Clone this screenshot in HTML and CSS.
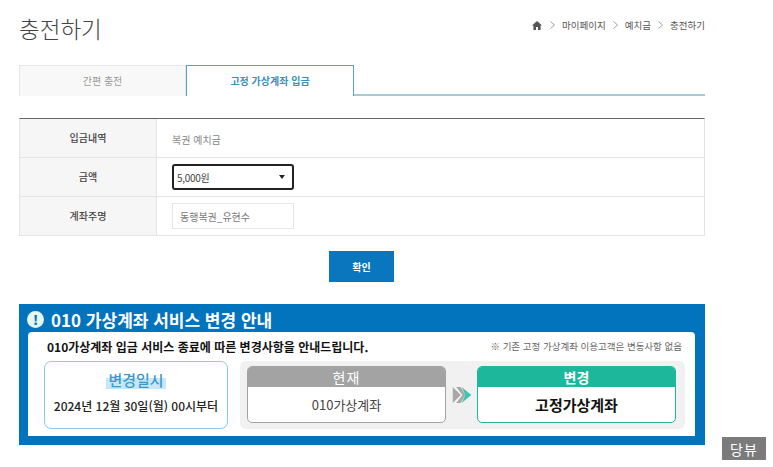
FILE: index.html
```html
<!DOCTYPE html>
<html lang="ko">
<head>
<meta charset="utf-8">
<title>충전하기</title>
<link rel="stylesheet" href="styles.css">
</head>
<body>
<div class="page">
  <header class="head">
    <h1 class="title">충전하기</h1>
    <nav class="crumbs">
      <svg class="home" viewBox="0 0 10 9" width="10" height="9"><path d="M5 0 L10 4.6 H8.6 V9 H6 V6 H4 V9 H1.4 V4.6 H0 Z" fill="#555"/></svg>
      <svg class="sep" viewBox="0 0 5 8" width="5" height="8"><path d="M0.5 0.5 L4.5 4 L0.5 7.5" fill="none" stroke="#888" stroke-width="0.8"/></svg><span>마이페이지</span>
      <svg class="sep" viewBox="0 0 5 8" width="5" height="8"><path d="M0.5 0.5 L4.5 4 L0.5 7.5" fill="none" stroke="#888" stroke-width="0.8"/></svg><span>예치금</span>
      <svg class="sep" viewBox="0 0 5 8" width="5" height="8"><path d="M0.5 0.5 L4.5 4 L0.5 7.5" fill="none" stroke="#888" stroke-width="0.8"/></svg><span>충전하기</span>
    </nav>
  </header>
  <div class="tabs">
    <div class="tab">간편 충전</div>
    <div class="tab active">고정 가상계좌 입금</div>
  </div>
  <div class="form">
    <div class="row">
      <div class="th">입금내역</div>
      <div class="td muted">복권 예치금</div>
    </div>
    <div class="row">
      <div class="th">금액</div>
      <div class="td"><div class="select"><span>5,000원</span><i class="caret"></i></div></div>
    </div>
    <div class="row">
      <div class="th">계좌주명</div>
      <div class="td"><div class="input">동행복권_유현수</div></div>
    </div>
  </div>
  <div class="actions"><button class="btn">확인</button></div>
  <section class="notice">
    <h2 class="notice-title"><span class="bang">!</span>010 가상계좌 서비스 변경 안내</h2>
    <div class="panel">
      <div class="panel-head">
        <strong>010가상계좌 입금 서비스 종료에 따른 변경사항을 안내드립니다.</strong>
        <small>※ 기존 고정 가상계좌 이용고객은 변동사항 없음</small>
      </div>
      <div class="panel-body">
        <div class="date">
          <div class="date-label">변경일시</div>
          <div class="date-value">2024년 12월 30일(월) 00시부터</div>
        </div>
        <div class="compare">
          <div class="card now">
            <div class="card-head">현재</div>
            <div class="card-body">010가상계좌</div>
          </div>
          <svg class="arrows" viewBox="0 0 22 18" width="21" height="16"><path d="M0 0 L9 9 L0 18 Z" fill="#a8a8a8"/><path d="M4 0 H9 L14 9 L9 18 H4 L11 9 Z" fill="#a8a8a8"/><path d="M10 0 L21 9 L10 18 L14 9 Z" fill="#3fc4b0"/></svg>
          <div class="card next">
            <div class="card-head">변경</div>
            <div class="card-body">고정가상계좌</div>
          </div>
        </div>
      </div>
    </div>
  </section>
</div>
<div class="stamp">당뷰</div>
</body>
</html>
```
FILE: styles.css
```css
* { box-sizing: border-box; }
html, body { margin: 0; padding: 0; background: #fff; height: 467px; overflow: hidden; }
body { font-family: "Noto Sans CJK KR", "Noto Sans", sans-serif; color: #333; position: relative; }
.page { width: 686px; margin-left: 19px; padding-top: 13px; }
.head { display: flex; justify-content: space-between; align-items: center; height: 32px; }
.title { margin: 0; font-size: 22.5px; font-weight: 300; color: #444; line-height: 32px; position: relative; top: -1px; }
.crumbs { display: flex; align-items: center; gap: 7px; font-size: 9.5px; color: #555; margin-top: -8px; }
.home { margin-right: 1px; }
.sep { flex: none; }
.tabs { display: flex; height: 31px; margin-top: 20px; border-bottom: 2px solid #a5c9d5; }
.tab { width: 167px; height: 31px; display: flex; align-items: center; justify-content: center; font-size: 10px; color: #999; background: #f8f8f8; border: 1px solid #e6e6e6; border-bottom: none; padding-bottom: 2px; }
.tab.active { width: 168px; background: #fff; color: #3d8fb3; font-weight: 700; border: 1px solid #5aa3c0; border-bottom: none; }
.form { margin-top: 22px; border-top: 1px solid #666; border-left: 1px solid #e4e4e4; border-right: 1px solid #e4e4e4; }
.row { display: flex; height: 39px; border-bottom: 1px solid #e4e4e4; }
.th { width: 137px; background: #f6f6f6; border-right: 1px solid #e4e4e4; display: flex; align-items: center; justify-content: center; font-size: 10px; font-weight: 500; color: #444; padding-bottom: 1px; }
.td { flex: 1; display: flex; align-items: center; padding-left: 15px; font-size: 10px; color: #444; }
.muted { color: #888; padding-top: 2px; }
.select { width: 122px; height: 26px; border: 2px solid #222; border-radius: 3px; display: flex; align-items: center; justify-content: space-between; padding: 0 7px 0 3px; font-size: 10px; letter-spacing: -0.3px; color: #444; }
.caret { width: 0; height: 0; border-left: 3px solid transparent; border-right: 3px solid transparent; border-top: 4px solid #222; }
.input { width: 122px; height: 26px; border: 1px solid #e6e6e6; display: flex; align-items: center; padding-left: 7px; font-size: 10px; color: #777; }
.actions { display: flex; justify-content: center; margin-top: 15px; padding-right: 1px; }
.btn { width: 65px; height: 31px; border: none; background: #0a76bd; color: #fff; font-family: inherit; font-size: 10px; font-weight: 700; padding: 0; }
.notice { margin-top: 22px; height: 141px; background: #0273bd; padding: 0 10px 9px 9px; display: flex; flex-direction: column; }
.notice-title { margin: 0 0 0 -1px; height: 28px; display: flex; align-items: center; gap: 7px; font-size: 17px; font-weight: 700; color: #fff; padding-top: 2px; line-height: 1; }
.bang { width: 17px; height: 17px; border-radius: 50%; background: #e6f6f0; color: #0273bd; font-size: 13px; font-weight: 900; display: flex; align-items: center; justify-content: center; }
.panel { height: 104px; background: #fff; border-radius: 4px 4px 0 0; padding: 4px 10px 7px 16px; display: flex; flex-direction: column; }
.panel-head { display: flex; justify-content: space-between; align-items: center; height: 20px; padding: 0 3px; margin-bottom: 5px; }
.panel-head strong { font-size: 12px; font-weight: 700; color: #111; }
.panel-head small { font-size: 9.5px; color: #666; }
.panel-body { flex: 1; display: flex; gap: 12px; }
.date { width: 184px; height: 68px; border: 1px solid #8ccae6; border-radius: 7px; display: flex; flex-direction: column; align-items: center; justify-content: center; padding-bottom: 6px; }
.date-label { font-size: 15px; font-weight: 500; color: #3d97c9; background: linear-gradient(transparent 40%, #c5e7f6 40%); padding: 0 2px; line-height: 18px; margin-bottom: 9px; }
.date-value { font-size: 12px; font-weight: 500; color: #222; line-height: 16px; }
.compare { flex: 1; height: 68px; background: #f1f1f1; border-radius: 6px; display: flex; align-items: flex-start; padding: 5px 9px 0 7px; }
.card { width: 199px; height: 57px; border-radius: 5px; overflow: hidden; display: flex; flex-direction: column; background: #fff; flex: none; }
.card-head { height: 21px; display: flex; align-items: center; justify-content: center; font-size: 14px; color: #fff; }
.card-body { flex: 1; display: flex; align-items: center; justify-content: center; }
.now { border: 1px solid #a3a3a3; }
.now .card-head { background: #a3a3a3; margin: -1px -1px 0; font-weight: 400; letter-spacing: 1px; }
.now .card-body { font-size: 13px; color: #444; }
.next { border: 1px solid #1db89c; }
.next .card-head { background: #1db89c; margin: -1px -1px 0; font-weight: 700; }
.next .card-body { font-size: 15px; font-weight: 700; color: #111; }
.arrows { margin: 21px 4px 0 6px; flex: none; }
.stamp { position: absolute; left: 722px; top: 437px; width: 44px; height: 23px; background: #7b7b7b; color: #fff; font-size: 14px; display: flex; align-items: center; justify-content: center; letter-spacing: 1px; }
```
